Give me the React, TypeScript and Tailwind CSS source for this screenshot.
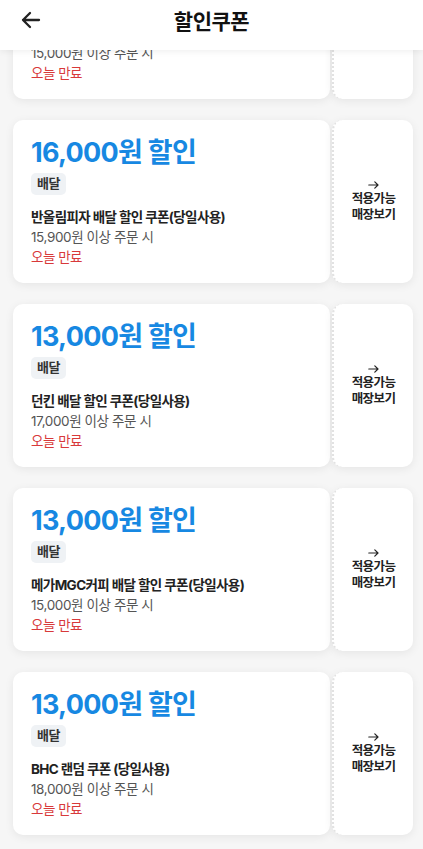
import { useLayoutEffect, useRef } from "react";

type Coupon = {
  amount: string;
  tag: string;
  name: string;
  minOrder: string;
  expire: string;
};

const coupons: Coupon[] = [
  { amount: "15,000원 할인", tag: "배달", name: "배달 할인 쿠폰(당일사용)", minOrder: "15,000원 이상 주문 시", expire: "오늘 만료" },
  { amount: "16,000원 할인", tag: "배달", name: "반올림피자 배달 할인 쿠폰(당일사용)", minOrder: "15,900원 이상 주문 시", expire: "오늘 만료" },
  { amount: "13,000원 할인", tag: "배달", name: "던킨 배달 할인 쿠폰(당일사용)", minOrder: "17,000원 이상 주문 시", expire: "오늘 만료" },
  { amount: "13,000원 할인", tag: "배달", name: "메가MGC커피 배달 할인 쿠폰(당일사용)", minOrder: "15,000원 이상 주문 시", expire: "오늘 만료" },
  { amount: "13,000원 할인", tag: "배달", name: "BHC 랜덤 쿠폰 (당일사용)", minOrder: "18,000원 이상 주문 시", expire: "오늘 만료" },
];

const font = "font-['Inter','Noto_Sans_CJK_KR',sans-serif]";

const CouponCard = ({ coupon }: { coupon: Coupon }) => {
  return (
    <div className="flex gap-[2px] h-[163px]">
      <div className="flex-1 bg-white rounded-[10px] shadow-[0_2px_10px_rgba(0,0,0,0.07)] pl-[18px] pt-4">
        <div className="text-[27px] leading-[34px] font-bold text-[#1788e2] tracking-[-0.7px]">{coupon.amount}</div>
        <div className="mt-[3px] inline-flex h-[22px] items-center rounded-[5px] bg-[#eff2f5] px-[6px] text-[13px] font-semibold text-[#333] tracking-[-0.5px]">
          {coupon.tag}
        </div>
        <div className="mt-3 text-[13.5px] leading-[20px] font-bold text-[#222] tracking-[-0.6px]">{coupon.name}</div>
        <div className="text-[13.5px] leading-[20px] text-[#555] tracking-[-0.4px]">{coupon.minOrder}</div>
        <div className="text-[13.5px] leading-[20px] text-[#d8393a] tracking-[-0.5px]">{coupon.expire}</div>
      </div>
      <div className="w-[81px] bg-white rounded-[10px] shadow-[0_2px_10px_rgba(0,0,0,0.07)] border-l-2 border-dotted border-[#e2e2e2] flex flex-col items-center justify-center">
        <svg width="11" height="8" viewBox="0 0 11 8" fill="none" stroke="#222" strokeWidth="1.2" strokeLinecap="round" strokeLinejoin="round">
          <path d="M0.8 4h9.2M6.8 0.9L10 4 6.8 7.1" />
        </svg>
        <div className="mt-[2px] text-[12.5px] leading-[16px] font-bold text-[#222] text-center tracking-[-0.6px]">
          적용가능
          <br />
          매장보기
        </div>
      </div>
    </div>
  );
};

const App = () => {
  const scrollRef = useRef<HTMLDivElement>(null);

  useLayoutEffect(() => {
    if (scrollRef.current) scrollRef.current.scrollTop = 136;
  }, []);

  return (
    <div className={`relative h-[849px] w-full overflow-hidden bg-[#f6f6f6] ${font}`}>
      <div className="absolute inset-x-0 top-0 z-10 h-[50px] bg-white shadow-[0_2px_6px_rgba(0,0,0,0.06)] flex items-center justify-center">
        <button className="absolute left-[19px] top-[8px] p-0 text-[#222]">
          <svg width="24" height="24" viewBox="0 0 24 24" fill="none" stroke="currentColor" strokeWidth="2.3" strokeLinecap="round" strokeLinejoin="round">
            <path d="M20 12H4M11 5l-7 7 7 7" />
          </svg>
        </button>
        <h1 className="text-[21px] font-bold text-[#111] tracking-[-0.5px] -mt-[6px]">할인쿠폰</h1>
      </div>
      <div ref={scrollRef} className="h-full overflow-y-auto [scrollbar-width:none]">
        <div className="flex flex-col gap-[21px] pt-[72px] pb-6 pl-[13px] pr-[10px]">
          {coupons.map((c, i) => (
            <CouponCard key={i} coupon={c} />
          ))}
        </div>
      </div>
    </div>
  );
};

export default App;
